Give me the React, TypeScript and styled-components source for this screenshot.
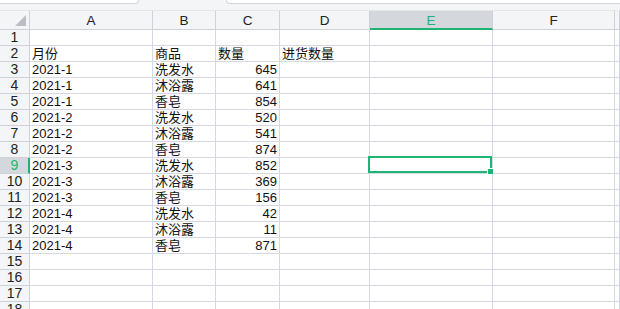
import React from "react";
import styled, { createGlobalStyle, css } from "styled-components";

const GlobalStyle = createGlobalStyle`
  html, body { margin: 0; padding: 0; background: #ffffff; overflow: hidden; }
  body { font-family: "Liberation Sans", "Noto Sans CJK SC", sans-serif; }
`;

const COLS = "30px 123px 63px 64px 90px 123px 122px 1fr";
const GRID = "#d5d9e5";
const HEAD_LINE = "#cdd1da";
const HEAD_BG = "#f4f5f7";
const ACTIVE_BG = "#d4d7dc";
const GREEN = "#1fb376";

const Sheet = styled.div`
  width: 620px;
  height: 309px;
  overflow: hidden;
  display: flex;
  flex-direction: column;
  background: #fff;
`;

const TopStrip = styled.div`
  height: 11px;
  flex: none;
  background: ${HEAD_BG};
  display: flex;
  align-items: flex-start;
  gap: 87px;
  box-sizing: border-box;
  border-bottom: 1px solid #e4e6ea;
`;

const Field = styled.div<{ $w?: number }>`
  height: 4px;
  box-sizing: border-box;
  background: #fff;
  border: 1px solid #d3d6dc;
  border-top: none;
  ${(p) => (p.$w ? css`width: ${p.$w}px; border-left: none; border-radius: 0 0 4px 0;` : css`flex: 1; border-right: none; border-radius: 0 0 0 4px;`)}
`;

const Row = styled.div<{ $h: number }>`
  display: grid;
  grid-template-columns: ${COLS};
  height: ${(p) => p.$h}px;
  flex: none;
`;

const Corner = styled.div`
  background: ${HEAD_BG};
  border-right: 1px solid ${HEAD_LINE};
  border-bottom: 1px solid ${HEAD_LINE};
  box-sizing: border-box;
  display: flex;
  align-items: flex-end;
  justify-content: flex-end;
  padding: 0 3px 3px 0;
`;

const ColHead = styled.div<{ $active?: boolean }>`
  box-sizing: border-box;
  background: ${(p) => (p.$active ? ACTIVE_BG : HEAD_BG)};
  border-right: 1px solid ${HEAD_LINE};
  border-bottom: ${(p) => (p.$active ? `2px solid ${GREEN}` : `1px solid ${HEAD_LINE}`)};
  color: ${(p) => (p.$active ? GREEN : "#222")};
  font-size: 13.5px;
  display: flex;
  align-items: center;
  justify-content: center;
  padding-top: ${(p) => (p.$active ? 1 : 0)}px;
`;

const RowHead = styled.div<{ $active?: boolean }>`
  box-sizing: border-box;
  background: ${(p) => (p.$active ? ACTIVE_BG : HEAD_BG)};
  border-right: ${(p) => (p.$active ? `2px solid ${GREEN}` : `1px solid ${HEAD_LINE}`)};
  border-bottom: 1px solid ${HEAD_LINE};
  color: ${(p) => (p.$active ? GREEN : "#222")};
  font-size: 14px;
  line-height: 15px;
  text-align: center;
  padding-left: ${(p) => (p.$active ? 1 : 0)}px;
`;

const Cell = styled.div<{ $num?: boolean }>`
  position: relative;
  box-sizing: border-box;
  border-right: 1px solid ${GRID};
  border-bottom: 1px solid ${GRID};
  font-size: 13px;
  line-height: 15px;
  color: #111;
  white-space: nowrap;
  padding: 0 2px;
  text-align: ${(p) => (p.$num ? "right" : "left")};
`;

const Selection = styled.div`
  position: absolute;
  left: -2px;
  top: -2px;
  right: 0;
  bottom: 0;
  border: 2px solid ${GREEN};
  pointer-events: none;
  z-index: 2;
`;

const FillHandle = styled.div`
  position: absolute;
  right: -3px;
  bottom: -3px;
  width: 5px;
  height: 5px;
  background: ${GREEN};
  border-left: 1px solid #fff;
  border-top: 1px solid #fff;
`;

const CornerTriangle = () => (
  <svg width="11" height="11" viewBox="0 0 11 11">
    <polygon points="11,0 11,11 0,11" fill="#babdc3" />
  </svg>
);

type Line = [string, string, string, string];

const data: Line[] = [
  ["", "", "", ""],
  ["月份", "商品", "数量", "进货数量"],
  ["2021-1", "洗发水", "645", ""],
  ["2021-1", "沐浴露", "641", ""],
  ["2021-1", "香皂", "854", ""],
  ["2021-2", "洗发水", "520", ""],
  ["2021-2", "沐浴露", "541", ""],
  ["2021-2", "香皂", "874", ""],
  ["2021-3", "洗发水", "852", ""],
  ["2021-3", "沐浴露", "369", ""],
  ["2021-3", "香皂", "156", ""],
  ["2021-4", "洗发水", "42", ""],
  ["2021-4", "沐浴露", "11", ""],
  ["2021-4", "香皂", "871", ""],
  ["", "", "", ""],
  ["", "", "", ""],
  ["", "", "", ""],
  ["", "", "", ""],
];

const letters = ["A", "B", "C", "D", "E", "F", ""];
const ACTIVE_ROW = 9;
const ACTIVE_COL = 4;

export default function App() {
  return (
    <Sheet>
      <GlobalStyle />
      <TopStrip>
        <Field $w={139} />
        <Field />
      </TopStrip>
      <Row $h={19}>
        <Corner>
          <CornerTriangle />
        </Corner>
        {letters.map((l, i) => (
          <ColHead key={i} $active={i === ACTIVE_COL}>
            {l}
          </ColHead>
        ))}
      </Row>
      {data.map((r, ri) => {
        const n = ri + 1;
        const cells = [r[0], r[1], r[2], r[3], "", "", ""];
        return (
          <Row $h={16} key={n}>
            <RowHead $active={n === ACTIVE_ROW}>{n}</RowHead>
            {cells.map((v, ci) => {
              const isNum = ci === 2 && /^\d+$/.test(v);
              const sel = n === ACTIVE_ROW && ci === ACTIVE_COL;
              return (
                <Cell key={ci} $num={isNum}>
                  {v}
                  {sel && (
                    <Selection>
                      <FillHandle />
                    </Selection>
                  )}
                </Cell>
              );
            })}
          </Row>
        );
      })}
    </Sheet>
  );
}
